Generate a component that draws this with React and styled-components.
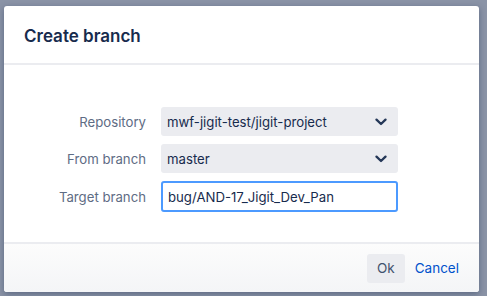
import React from "react";
import styled, { createGlobalStyle } from "styled-components";

const Global = createGlobalStyle`
  html, body { margin: 0; padding: 0; height: 100%; }
  body {
    background: #8a93a6;
    font-family: "Inter", "Liberation Sans", Arial, sans-serif;
    overflow: hidden;
  }
  #root { height: 100%; }
`;

const Backdrop = styled.div`
  height: 100%;
  box-sizing: border-box;
  padding: 6px 8px 0 4px;
`;

const Dialog = styled.div`
  width: 475px;
  height: 286px;
  background: #fff;
  border-radius: 3px;
  box-shadow: 0 2px 6px rgba(9, 30, 66, 0.35);
  display: flex;
  flex-direction: column;
  overflow: hidden;
`;

const Header = styled.div`
  height: 57px;
  display: flex;
  align-items: center;
  padding: 0 20px;
  border-bottom: 2px solid #ebecf0;
  flex-shrink: 0;
`;

const Title = styled.h1`
  margin: 0;
  font-size: 17px;
  font-weight: 600;
  color: #172b4d;
  padding-top: 2px;
`;

const Body = styled.div`
  flex: 1;
  display: flex;
  flex-direction: column;
  gap: 8px;
  padding: 42px 0 0;
`;

const Row = styled.div`
  display: grid;
  grid-template-columns: 142px 237px;
  column-gap: 15px;
  align-items: center;
`;

const Label = styled.label`
  text-align: right;
  font-size: 13.2px;
  color: #5e6c84;
`;

const Select = styled.div`
  height: 29px;
  box-sizing: border-box;
  background: #ebecf0;
  border-radius: 3px;
  display: flex;
  align-items: center;
  justify-content: space-between;
  padding: 0 11px 0 6px;
  font-size: 13.2px;
  color: #172b4d;
`;

const Input = styled.div`
  height: 31px;
  box-sizing: border-box;
  border: 2px solid #4c9aff;
  border-radius: 3px;
  background: #fff;
  display: flex;
  align-items: center;
  padding: 0 5px;
  font-size: 13.2px;
  color: #172b4d;
`;

const Footer = styled.div`
  height: 48px;
  flex-shrink: 0;
  border-top: 2px solid #ebecf0;
  background: linear-gradient(#fcfcfc, #f4f5f7);
  display: flex;
  align-items: center;
  justify-content: flex-end;
  padding: 0 10px 0 0;
`;

const Button = styled.button`
  height: 29px;
  border: none;
  border-radius: 3px;
  font-family: inherit;
  font-size: 13.5px;
  padding: 0 10px;
  cursor: pointer;
  background: ${(p) => (p.$link ? "transparent" : "#ebecf0")};
  color: ${(p) => (p.$link ? "#0052cc" : "#42526e")};
`;

const Chevron = () => (
  <svg width="12" height="8" viewBox="0 0 12 8">
    <path d="M1.5 1.6 L6 6 L10.5 1.6" fill="none" stroke="#253858" strokeWidth="2.3" strokeLinecap="round" strokeLinejoin="round" />
  </svg>
);

export default function App() {
  return (
    <>
      <Global />
      <Backdrop>
        <Dialog>
          <Header>
            <Title>Create branch</Title>
          </Header>
          <Body>
            <Row>
              <Label>Repository</Label>
              <Select>
                <span>mwf-jigit-test/jigit-project</span>
                <Chevron />
              </Select>
            </Row>
            <Row>
              <Label>From branch</Label>
              <Select>
                <span>master</span>
                <Chevron />
              </Select>
            </Row>
            <Row>
              <Label>Target branch</Label>
              <Input>bug/AND-17_Jigit_Dev_Pan</Input>
            </Row>
          </Body>
          <Footer>
            <Button>Ok</Button>
            <Button $link>Cancel</Button>
          </Footer>
        </Dialog>
      </Backdrop>
    </>
  );
}
